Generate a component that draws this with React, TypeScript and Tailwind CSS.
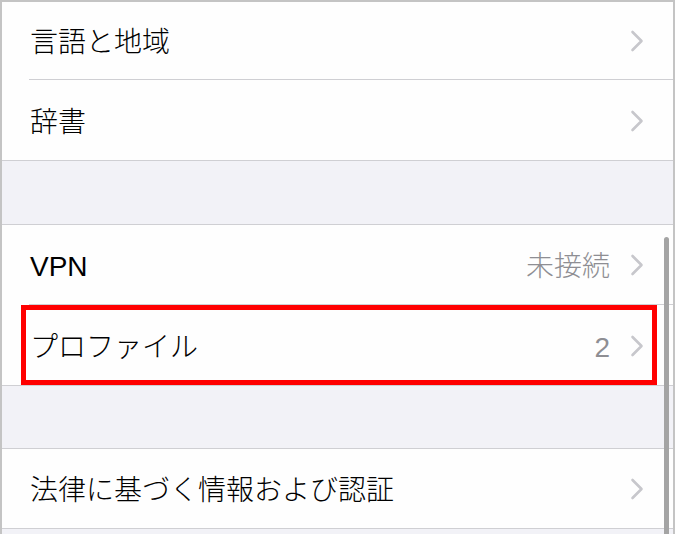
import React from "react";

const Chevron = () => (
  <svg width="14" height="22" viewBox="0 0 14 22" className="shrink-0">
    <path d="M2.5 2 L11.5 11 L2.5 20" fill="none" stroke="#c7c7cc" strokeWidth="2.6" strokeLinecap="round" strokeLinejoin="round" />
  </svg>
);

type RowProps = { label: string; value?: string; h: string; inset?: boolean };

const Row = ({ label, value, h, inset = true }: RowProps) => (
  <div className={`${h} bg-[#fefefe] relative flex items-center pl-[28px] pr-[29px]`}>
    <div className="flex-1 text-[28px] leading-none text-black font-light pt-[4px]">{label}</div>
    {value && <div className="text-[28px] leading-none text-[#8e8e93] mr-[20px] font-light pt-[4px]">{value}</div>}
    <Chevron />
    <div className={`absolute bottom-0 right-0 h-px bg-[#cfcfd3] ${inset ? "left-[27px]" : "left-0"}`} />
  </div>
);

export default function App() {
  return (
    <div
      className="w-[675px] h-[534px] overflow-hidden relative bg-[#f2f2f7] border-l-2 border-t-2 border-r-2 border-[#c4c4c4]"
      style={{ fontFamily: '"Liberation Sans", "Noto Sans CJK JP", sans-serif' }}
    >
      <div className="flex flex-col">
        <Row label="言語と地域" h="h-[78px]" />
        <Row label="辞書" h="h-[81px]" inset={false} />
        <div className="h-[64px] bg-[#f2f2f7] border-b border-[#cfcfd3]" />
        <Row label="VPN" value="未接続" h="h-[80px]" />
        <Row label="プロファイル" value="2" h="h-[81px]" inset={false} />
        <div className="h-[63px] bg-[#f2f2f7] border-b border-[#cfcfd3]" />
        <Row label="法律に基づく情報および認証" h="h-[80px]" inset={false} />
        <div className="h-[20px] bg-[#f2f2f7]" />
      </div>
      <div className="absolute left-[19px] top-[303px] w-[636px] h-[80px] border-[5px] border-[#ff0000]" />
      <div className="absolute left-[662px] top-[235px] w-[5px] h-[320px] rounded-full bg-[#a4a4a4]" />
    </div>
  );
}
